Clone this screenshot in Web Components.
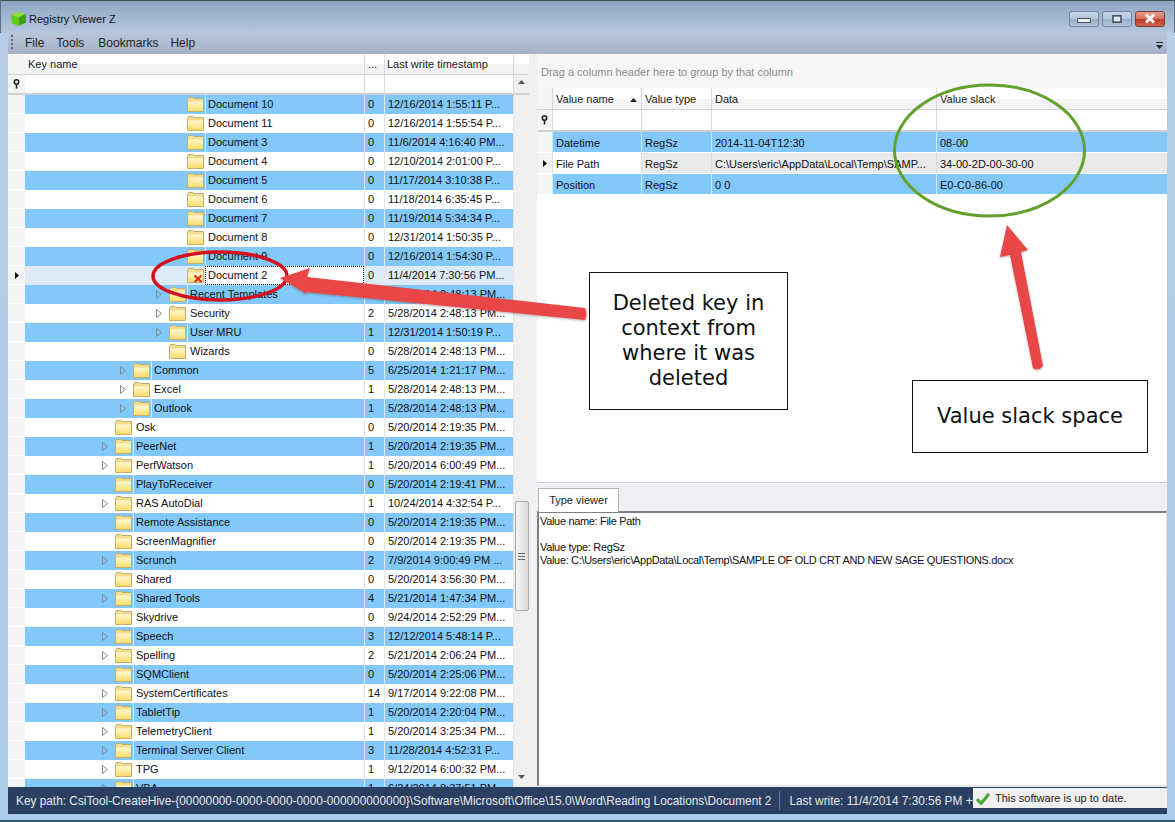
<!DOCTYPE html>
<html>
<head>
<meta charset="utf-8">
<title>Registry Viewer Z</title>
<style>
  html, body { margin: 0; padding: 0; }
  body {
    width: 1175px;
    height: 822px;
    overflow: hidden;
    position: relative;
    font: 11px/13px "Liberation Sans", sans-serif;
    color: #1a1a1a;
    background: #b5d0ec;
  }
</style>
</head>
<body>
<rv-window>
  <rv-titlebar slot="title">Registry Viewer Z</rv-titlebar>
  <rv-menubar slot="menu">
    <span>File</span><span>Tools</span><span>Bookmarks</span><span>Help</span>
  </rv-menubar>
  <rv-key-grid slot="left">
    <rv-key-row level="3" count="0" time="12/16/2014 1:55:11 P...">Document 10</rv-key-row>
    <rv-key-row level="3" count="0" time="12/16/2014 1:55:54 P...">Document 11</rv-key-row>
    <rv-key-row level="3" count="0" time="11/6/2014 4:16:40 PM...">Document 3</rv-key-row>
    <rv-key-row level="3" count="0" time="12/10/2014 2:01:00 P...">Document 4</rv-key-row>
    <rv-key-row level="3" count="0" time="11/17/2014 3:10:38 P...">Document 5</rv-key-row>
    <rv-key-row level="3" count="0" time="11/18/2014 6:35:45 P...">Document 6</rv-key-row>
    <rv-key-row level="3" count="0" time="11/19/2014 5:34:34 P...">Document 7</rv-key-row>
    <rv-key-row level="3" count="0" time="12/31/2014 1:50:35 P...">Document 8</rv-key-row>
    <rv-key-row level="3" count="0" time="12/16/2014 1:54:30 P...">Document 9</rv-key-row>
    <rv-key-row level="3" count="0" time="11/4/2014 7:30:56 PM..." selected deleted>Document 2</rv-key-row>
    <rv-key-row level="2" count="2" time="5/28/2014 2:48:13 PM..." expander>Recent Templates</rv-key-row>
    <rv-key-row level="2" count="2" time="5/28/2014 2:48:13 PM..." expander>Security</rv-key-row>
    <rv-key-row level="2" count="1" time="12/31/2014 1:50:19 P..." expander>User MRU</rv-key-row>
    <rv-key-row level="2" count="0" time="5/28/2014 2:48:13 PM...">Wizards</rv-key-row>
    <rv-key-row level="1" count="5" time="6/25/2014 1:21:17 PM..." expander>Common</rv-key-row>
    <rv-key-row level="1" count="1" time="5/28/2014 2:48:13 PM..." expander>Excel</rv-key-row>
    <rv-key-row level="1" count="1" time="5/28/2014 2:48:13 PM..." expander>Outlook</rv-key-row>
    <rv-key-row level="0" count="0" time="5/20/2014 2:19:35 PM...">Osk</rv-key-row>
    <rv-key-row level="0" count="1" time="5/20/2014 2:19:35 PM..." expander>PeerNet</rv-key-row>
    <rv-key-row level="0" count="1" time="5/20/2014 6:00:49 PM..." expander>PerfWatson</rv-key-row>
    <rv-key-row level="0" count="0" time="5/20/2014 2:19:41 PM...">PlayToReceiver</rv-key-row>
    <rv-key-row level="0" count="1" time="10/24/2014 4:32:54 P..." expander>RAS AutoDial</rv-key-row>
    <rv-key-row level="0" count="0" time="5/20/2014 2:19:35 PM...">Remote Assistance</rv-key-row>
    <rv-key-row level="0" count="0" time="5/20/2014 2:19:35 PM...">ScreenMagnifier</rv-key-row>
    <rv-key-row level="0" count="2" time="7/9/2014 9:00:49 PM ..." expander>Scrunch</rv-key-row>
    <rv-key-row level="0" count="0" time="5/20/2014 3:56:30 PM...">Shared</rv-key-row>
    <rv-key-row level="0" count="4" time="5/21/2014 1:47:34 PM..." expander>Shared Tools</rv-key-row>
    <rv-key-row level="0" count="0" time="9/24/2014 2:52:29 PM...">Skydrive</rv-key-row>
    <rv-key-row level="0" count="3" time="12/12/2014 5:48:14 P..." expander>Speech</rv-key-row>
    <rv-key-row level="0" count="2" time="5/21/2014 2:06:24 PM..." expander>Spelling</rv-key-row>
    <rv-key-row level="0" count="0" time="5/20/2014 2:25:06 PM...">SQMClient</rv-key-row>
    <rv-key-row level="0" count="14" time="9/17/2014 9:22:08 PM..." expander>SystemCertificates</rv-key-row>
    <rv-key-row level="0" count="1" time="5/20/2014 2:20:04 PM..." expander>TabletTip</rv-key-row>
    <rv-key-row level="0" count="1" time="5/20/2014 3:25:34 PM..." expander>TelemetryClient</rv-key-row>
    <rv-key-row level="0" count="3" time="11/28/2014 4:52:31 P..." expander>Terminal Server Client</rv-key-row>
    <rv-key-row level="0" count="1" time="9/12/2014 6:00:32 PM..." expander>TPG</rv-key-row>
    <rv-key-row level="0" count="1" time="6/24/2014 8:37:51 PM..." expander>VBA</rv-key-row>
  </rv-key-grid>
  <rv-value-grid slot="right-top">
    <rv-value-row name="Datetime" type="RegSz" data="2014-11-04T12:30" slack="08-00"></rv-value-row>
    <rv-value-row name="File Path" type="RegSz" data="C:\Users\eric\AppData\Local\Temp\SAMP..." slack="34-00-2D-00-30-00" current></rv-value-row>
    <rv-value-row name="Position" type="RegSz" data="0 0" slack="E0-C0-86-00"></rv-value-row>
  </rv-value-grid>
  <rv-type-viewer slot="right-bottom">Value name: File Path

Value type: RegSz
Value: C:\Users\eric\AppData\Local\Temp\SAMPLE OF OLD CRT AND NEW SAGE QUESTIONS.docx</rv-type-viewer>
  <rv-statusbar slot="status" path="Key path: CsiTool-CreateHive-{00000000-0000-0000-0000-000000000000}\Software\Microsoft\Office\15.0\Word\Reading Locations\Document 2" write="Last write: 11/4/2014 7:30:56 PM +00:00"></rv-statusbar>
</rv-window>
<rv-annotations></rv-annotations>

<script>
const FOLDER = (deleted) => `
  <svg width="17" height="15" viewBox="0 0 17 15">
    <defs><linearGradient id="fy" x1="0" y1="0" x2="0" y2="1">
      <stop offset="0" stop-color="#fff8d0"/><stop offset="1" stop-color="#fbdc69"/>
    </linearGradient></defs>
    <path d="M.5 2.5 V14.5 H16.5 V1.5 H7 L6 .5 H1.5 Z" fill="#f3dc8a" stroke="#bfae76"/>
    <path d="M1 4.5 H16 V14 H1 Z" fill="url(#fy)"/>
    ${deleted ? '<path d="M7.5 7.5 L14.5 14 M14.5 7.5 L7.5 14" stroke="#d2301c" stroke-width="2"/>' : ''}
  </svg>`;

const PIN = `
  <svg width="9" height="10" viewBox="0 0 9 10">
    <circle cx="4.5" cy="3" r="2.2" fill="none" stroke="#222" stroke-width="1.6"/>
    <path d="M4.5 5 V9.5" stroke="#222" stroke-width="1.6"/>
  </svg>`;

class RvWindow extends HTMLElement {
  constructor() {
    super();
    this.attachShadow({ mode: 'open' });
    this.shadowRoot.innerHTML = `
      <style>
        :host {
          display: flex;
          flex-direction: column;
          width: 1175px;
          height: 822px;
          box-sizing: border-box;
          border-bottom: 2px solid #2f5d66;
          background: linear-gradient(#b9cfe8, #abcbec);
        }
        .main {
          display: flex;
          height: 733px;
          padding: 0 8px;
          box-sizing: border-box;
          background: #eef0f3;
          background-clip: content-box;
        }
        .split { width: 8px; }
        .right {
          width: 630px;
          display: flex;
          flex-direction: column;
        }
      </style>
      <slot name="title"></slot>
      <slot name="menu"></slot>
      <div class="main">
        <slot name="left"></slot>
        <div class="split"></div>
        <div class="right">
          <slot name="right-top"></slot>
          <slot name="right-bottom"></slot>
        </div>
      </div>
      <slot name="status"></slot>
    `;
  }
}

class RvTitlebar extends HTMLElement {
  constructor() {
    super();
    this.attachShadow({ mode: 'open' });
    this.shadowRoot.innerHTML = `
      <style>
        :host {
          display: flex;
          align-items: center;
          height: 33px;
          box-sizing: border-box;
          padding: 3px 9px 0 9px;
          border-top: 1px solid #3d4f5b;
          border-left: 1px solid #5b7088;
          border-right: 1px solid #5b7088;
          background: linear-gradient(#8ea6c4, #b6c7dd);
          font: 11px "Liberation Sans", sans-serif;
          color: #111;
        }
        svg { margin-right: 2px; }
        .title { flex: 1; }
        .btn {
          width: 30px;
          height: 16px;
          margin-left: 4px;
          box-sizing: border-box;
          border: 1px solid #6f7f95;
          border-radius: 3px;
          display: flex;
          align-items: center;
          justify-content: center;
          background: linear-gradient(#c5d6ea 0, #b3c5dc 50%, #96abc6 51%, #b4c8df 100%);
        }
        .btn + .btn { margin-left: 3px; }
        .min i { display: block; width: 12px; height: 3px; border: 1px solid #44505e; background: #eef2f6; margin-top: 4px; }
        .max i { display: block; width: 8px; height: 6px; border: 2px solid #44505e; background: #dfe7f0; box-sizing: content-box; transform: scale(.8); }
        .close { background: linear-gradient(#e39c8c 0, #d9705e 50%, #bf3a28 51%, #d0604c 100%); border-color: #7b3c36; }
      </style>
      <svg width="17" height="16" viewBox="0 0 17 16">
        <path d="M1 4 L8 1 L16 3 L9 6 Z" fill="#8fe040"/>
        <path d="M1 4 L9 6 V15 L2 12.5 Z" fill="#5ecb20"/>
        <path d="M9 6 L16 3 V11.5 L9 15 Z" fill="#3a9f14"/>
      </svg>
      <div class="title"><slot></slot></div>
      <div class="btn min"><i></i></div>
      <div class="btn max"><i></i></div>
      <div class="btn close">
        <svg width="14" height="11" viewBox="0 0 14 11" style="margin:0"><path d="M3 1.5 L11 9.5 M11 1.5 L3 9.5" stroke="#fff" stroke-width="3"/></svg>
      </div>
    `;
  }
}

class RvMenubar extends HTMLElement {
  constructor() {
    super();
    this.attachShadow({ mode: 'open' });
    this.shadowRoot.innerHTML = `
      <style>
        :host {
          display: flex;
          align-items: center;
          height: 21px;
          margin: 0 8px;
          padding: 0 0 2px 3px;
          box-sizing: border-box;
          background: linear-gradient(#b8c7dc, #a6b0c5);
          font: 12px "Liberation Sans", sans-serif;
          color: #222;
        }
        .grip {
          width: 2px;
          height: 15px;
          margin-right: 12px;
          background: repeating-linear-gradient(#5d6672 0 2px, transparent 2px 4px);
        }
        ::slotted(span) { margin-right: 12px; }
        ::slotted(span:nth-child(2)) { margin-right: 14px; }
        .over { margin-left: auto; margin-right: 3px; margin-top: 6px; }
      </style>
      <div class="grip"></div>
      <slot></slot>
      <svg class="over" width="9" height="8" viewBox="0 0 9 8">
        <path d="M1 .5 H8" stroke="#1c2430"/><path d="M1 3 H8 L4.5 7 Z" fill="#1c2430"/>
      </svg>
    `;
  }
}

class RvKeyGrid extends HTMLElement {
  constructor() {
    super();
    this.attachShadow({ mode: 'open' });
    this.shadowRoot.innerHTML = `
      <style>
        :host {
          display: flex;
          flex-direction: column;
          width: 521px;
          height: 733px;
          background: #fff;
          overflow: hidden;
          font: 11px/13px "Liberation Sans", sans-serif;
        }
        .hdr {
          display: flex;
          height: 21px;
          box-sizing: border-box;
          padding-top: 1px;
          background: linear-gradient(#fff 50%, #f3f3f6 50%);
          border-bottom: 1px solid #d3d3da;
          color: #222;
          flex: none;
        }
        .filter {
          display: flex;
          height: 20px;
          box-sizing: border-box;
          border-bottom: 2px solid #cfd0d4;
          flex: none;
        }
        .c0 { width: 17px; background: #f4f4f4; display: flex; align-items: center; justify-content: center; }
        .c1 { width: 339px; padding-left: 3px; box-sizing: border-box; }
        .c2 { width: 20px; padding-left: 3px; box-sizing: border-box; border-left: 1px solid #d8d8de; }
        .c3 { width: 129px; padding-left: 2px; box-sizing: border-box; border-left: 1px solid #d8d8de; }
        .c4 { width: 16px; box-sizing: border-box; border-left: 1px solid #d8d8de; }
        .hdr div { display: flex; align-items: center; white-space: nowrap; padding-bottom: 1px; }
        .body { display: flex; flex: 1; min-height: 0; }
        .rows { width: 505px; overflow: hidden; }
        .bar {
          width: 16px;
          display: flex;
          flex-direction: column;
          align-items: center;
          background: #f0f0f0;
          border-left: 1px solid #e4e4e4;
          box-sizing: border-box;
        }
        .filter .c4 { background: #f0f0f0; display: flex; justify-content: center; padding-top: 5px; }
        .thumb {
          width: 14px;
          height: 110px;
          margin-top: 406px;
          box-sizing: border-box;
          border: 1px solid #a9a9a9;
          border-radius: 2px;
          background: linear-gradient(90deg, #f4f4f4, #dcdcdc);
          display: flex;
          align-items: center;
          justify-content: center;
        }
        .thumb i { display: block; width: 7px; height: 7px; background: repeating-linear-gradient(#666 0 1px, transparent 1px 3px); }
        .down { margin-top: auto; margin-bottom: 8px; }
      </style>
      <div class="hdr">
        <div class="c0"></div><div class="c1">Key name</div><div class="c2">...</div><div class="c3">Last write timestamp</div><div class="c4"></div>
      </div>
      <div class="filter">
        <div class="c0">${PIN}</div><div class="c1"></div><div class="c2"></div><div class="c3"></div>
        <div class="c4"><svg width="7" height="4" viewBox="0 0 7 4"><path d="M0 4 L3.5 0 L7 4 Z" fill="#555"/></svg></div>
      </div>
      <div class="body">
        <div class="rows"><slot></slot></div>
        <div class="bar">
          <div class="thumb"><i></i></div>
          <svg class="down" width="7" height="4" viewBox="0 0 7 4"><path d="M0 0 L7 0 L3.5 4 Z" fill="#555"/></svg>
        </div>
      </div>
    `;
  }
}

class RvKeyRow extends HTMLElement {
  constructor() {
    super();
    this.attachShadow({ mode: 'open' });
  }

  connectedCallback() {
    const level = Number(this.getAttribute('level') || 0);
    const index = Array.from(this.parentNode.children).indexOf(this);
    const selected = this.hasAttribute('selected');
    const stripe = selected ? '#dcebf7' : index % 2 === 0 ? '#82c8fa' : '#fff';
    const folderLeft = { 0: 90, 1: 108, 2: 144, 3: 162 }[level];
    this.shadowRoot.innerHTML = `
      <style>
        :host {
          display: flex;
          height: 19px;
          background: ${stripe};
          white-space: nowrap;
          color: #111;
        }
        .ind {
          width: 17px;
          background: #f4f4f4;
          border-bottom: 1px solid #fff;
          box-sizing: border-box;
          display: flex;
          align-items: center;
          justify-content: center;
        }
        .tree {
          width: 339px;
          display: flex;
          align-items: center;
          padding-left: ${folderLeft - 18}px;
          box-sizing: border-box;
        }
        .exp { width: 18px; display: flex; padding-left: 5px; box-sizing: border-box; }
        .name {
          flex: 1;
          height: 100%;
          display: flex;
          align-items: center;
          margin-left: 1px;
          padding-left: 2px;
          box-sizing: border-box;
          border-left: 1px solid ${index % 2 === 0 && !selected ? '#d5ecfd' : 'transparent'};
          ${selected ? 'outline: 1px dotted #111; outline-offset: -1px; background: #fff;' : ''}
        }
        .folder { display: flex; width: 17px; flex: none; }
        .n { width: 20px; padding-left: 3px; box-sizing: border-box; border-left: 1px solid #e3e6ea; display: flex; align-items: center; }
        .t { width: 129px; padding-left: 3px; box-sizing: border-box; border-left: 1px solid #e3e6ea; display: flex; align-items: center; overflow: hidden; }
      </style>
      <div class="ind">${selected ? '<svg width="4" height="7" viewBox="0 0 4 7"><path d="M0 0 L4 3.5 L0 7 Z" fill="#111"/></svg>' : ''}</div>
      <div class="tree">
        <div class="exp">${this.hasAttribute('expander') ? '<svg width="6" height="9" viewBox="0 0 6 9"><path d="M.5 .5 L5.5 4.5 L.5 8.5 Z" fill="none" stroke="#7f8b96"/></svg>' : ''}</div>
        <div class="folder">${FOLDER(this.hasAttribute('deleted'))}</div>
        <div class="name"><slot></slot></div>
      </div>
      <div class="n">${this.getAttribute('count')}</div>
      <div class="t">${this.getAttribute('time')}</div>
    `;
  }
}

class RvValueGrid extends HTMLElement {
  constructor() {
    super();
    this.attachShadow({ mode: 'open' });
    this.shadowRoot.innerHTML = `
      <style>
        :host {
          display: block;
          height: 429px;
          flex: none;
          background: #fff;
          border-bottom: 1px solid #cfcfcf;
          box-sizing: border-box;
          font: 11px/13px "Liberation Sans", sans-serif;
        }
        .group {
          height: 34px;
          background: #f6f6f6;
          color: #8c8c8c;
          display: flex;
          align-items: center;
          padding-left: 4px;
          padding-top: 2px;
          box-sizing: border-box;
        }
        .hdr, .filter { display: flex; }
        .hdr {
          height: 22px;
          box-sizing: border-box;
          background: linear-gradient(#fff 50%, #f3f3f6 50%);
          border-bottom: 1px solid #d3d3da;
          color: #222;
        }
        .hdr div { padding-top: 2px; }
        .filter { height: 22px; box-sizing: border-box; border-bottom: 2px solid #cfd0d4; }
        .c0 { width: 15px; background: #f4f4f4; display: flex; align-items: center; justify-content: center; }
        .c1, .c2, .c3, .c4 {
          box-sizing: border-box;
          padding-left: 3px;
          border-left: 1px solid #d8d8de;
          display: flex;
          align-items: center;
        }
        .c1 { width: 89px; justify-content: space-between; padding-right: 4px; }
        .c2 { width: 70px; }
        .c3 { width: 225px; }
        .c4 { width: 231px; }
      </style>
      <div class="group">Drag a column header here to group by that column</div>
      <div class="hdr">
        <div class="c0"></div>
        <div class="c1">Value name<svg width="7" height="4" viewBox="0 0 7 4"><path d="M0 4 L3.5 0 L7 4 Z" fill="#222"/></svg></div>
        <div class="c2">Value type</div><div class="c3">Data</div><div class="c4">Value slack</div>
      </div>
      <div class="filter">
        <div class="c0">${PIN}</div><div class="c1"></div><div class="c2"></div><div class="c3"></div><div class="c4"></div>
      </div>
      <slot></slot>
    `;
  }
}

class RvValueRow extends HTMLElement {
  constructor() {
    super();
    this.attachShadow({ mode: 'open' });
  }

  connectedCallback() {
    const current = this.hasAttribute('current');
    const bg = current ? '#e9e9e9' : '#82c8fa';
    const line = current ? '#dcdcdc' : '#cfe8fb';
    this.shadowRoot.innerHTML = `
      <style>
        :host { display: flex; height: 21px; color: #111; }
        div { box-sizing: border-box; display: flex; align-items: center; white-space: nowrap; border-bottom: 1px solid #fff; }
        .i { width: 15px; background: #f4f4f4; justify-content: center; }
        .c { background: ${bg}; padding: 2px 0 0 3px; border-left: 1px solid ${line}; }
      </style>
      <div class="i">${current ? '<svg width="4" height="7" viewBox="0 0 4 7"><path d="M0 0 L4 3.5 L0 7 Z" fill="#111"/></svg>' : ''}</div>
      <div class="c" style="width:89px;${current ? 'background:#fff' : ''}">${this.getAttribute('name')}</div>
      <div class="c" style="width:70px">${this.getAttribute('type')}</div>
      <div class="c" style="width:225px">${this.getAttribute('data')}</div>
      <div class="c" style="width:231px">${this.getAttribute('slack')}</div>
    `;
  }
}

class RvTypeViewer extends HTMLElement {
  constructor() {
    super();
    this.attachShadow({ mode: 'open' });
    this.shadowRoot.innerHTML = `
      <style>
        :host {
          display: flex;
          flex-direction: column;
          flex: 1;
          min-height: 0;
          padding-top: 5px;
          padding-bottom: 1px;
          box-sizing: border-box;
          font: 11px/13px "Liberation Sans", sans-serif;
        }
        .tab {
          width: 81px;
          height: 24px;
          margin-left: 1px;
          margin-bottom: -1px;
          box-sizing: border-box;
          background: #fff;
          border: 1px solid #b5b5b5;
          border-bottom: 0;
          display: flex;
          align-items: center;
          justify-content: center;
          color: #222;
          position: relative;
        }
        .box {
          flex: 1;
          background: #fff;
          border: 1px solid #8c8c8c;
          border-top: 2px solid #7f7f7f;
          border-left: 2px solid #7f7f7f;
          border-right-color: #ddd;
          border-bottom-color: #ddd;
          padding: 2px 1px;
          white-space: pre;
          letter-spacing: -.33px;
          color: #111;
          overflow: hidden;
        }
      </style>
      <div class="tab">Type viewer</div>
      <div class="box"><slot></slot></div>
    `;
  }
}

class RvStatusbar extends HTMLElement {
  constructor() {
    super();
    this.attachShadow({ mode: 'open' });
  }

  connectedCallback() {
    this.shadowRoot.innerHTML = `
      <style>
        :host {
          display: flex;
          align-items: center;
          height: 27px;
          margin: 0 8px;
          padding: 0 194px 0 8px;
          box-sizing: border-box;
          background: #2a3f61;
          color: #e6eaf0;
          font: 11.85px "Liberation Sans", sans-serif;
          white-space: nowrap;
          position: relative;
        }
        .path { flex: none; }
        .sep { width: 1px; height: 19px; background: #6d7c94; margin: 0 9px 0 8px; flex: none; }
        .write { flex: 1; min-width: 0; overflow: hidden; }
        .note {
          position: absolute;
          right: 0;
          top: 1px;
          width: 194px;
          height: 20px;
          background: #f0f0f0;
          color: #222;
          font-size: 11px;
          display: flex;
          align-items: center;
        }
        .note svg { margin: 0 5px 0 3px; }
      </style>
      <span class="path">${this.getAttribute('path')}</span>
      <span class="sep"></span>
      <span class="write">${this.getAttribute('write')}</span>
      <div class="note">
        <svg width="14" height="13" viewBox="0 0 14 13"><path d="M1 7 L5 11.5 L13 2" fill="none" stroke="#4aa83a" stroke-width="3.2"/></svg>
        This software is up to date.
      </div>
    `;
  }
}

class RvCallout extends HTMLElement {
  constructor() {
    super();
    this.attachShadow({ mode: 'open' });
    this.shadowRoot.innerHTML = `
      <style>
        :host {
          position: absolute;
          box-sizing: border-box;
          display: flex;
          align-items: center;
          justify-content: center;
          text-align: center;
          background: #fff;
          border: 1px solid #111;
          color: #111;
          font: 21px/25px "DejaVu Sans", sans-serif;
        }
      </style>
      <slot></slot>
    `;
  }
}

class RvAnnotations extends HTMLElement {
  constructor() {
    super();
    this.attachShadow({ mode: 'open' });
    this.shadowRoot.innerHTML = `
      <style>
        :host { position: absolute; left: 0; top: 0; width: 1175px; height: 822px; display: block; pointer-events: none; }
        svg { position: absolute; left: 0; top: 0; }
        rv-callout.a { left: 589px; top: 272px; width: 199px; height: 138px; }
        rv-callout.b { left: 912px; top: 380px; width: 236px; height: 73px; }
      </style>
      <svg width="1175" height="822" viewBox="0 0 1175 822">
        <defs>
          <filter id="sh" x="-5%" y="-5%" width="110%" height="120%">
            <feDropShadow dx="0" dy="1" stdDeviation="1.2" flood-color="#000" flood-opacity=".3"/>
          </filter>
        </defs>
        <ellipse cx="220" cy="276" rx="67" ry="24" fill="none" stroke="#d4101c" stroke-width="3.5"/>
        <ellipse cx="989.5" cy="150.5" rx="95" ry="65.5" fill="none" stroke="#63a02e" stroke-width="3"/>
        <g fill="#e94646" filter="url(#sh)">
          <path d="M280 278 L310 268 L307 277 L585 308 Q588 314 585 320 L305 292 L308 295 Z"/>
          <path d="M1007 225 L1028 250 L1021 252 L1043 366 Q1038 372 1033 368 L1010 255 L1000 257 Z"/>
        </g>
      </svg>
      <rv-callout class="a">Deleted key in<br>context from<br>where it was<br>deleted</rv-callout>
      <rv-callout class="b">Value slack space</rv-callout>
    `;
  }
}

customElements.define('rv-window', RvWindow);
customElements.define('rv-titlebar', RvTitlebar);
customElements.define('rv-menubar', RvMenubar);
customElements.define('rv-key-grid', RvKeyGrid);
customElements.define('rv-key-row', RvKeyRow);
customElements.define('rv-value-grid', RvValueGrid);
customElements.define('rv-value-row', RvValueRow);
customElements.define('rv-type-viewer', RvTypeViewer);
customElements.define('rv-statusbar', RvStatusbar);
customElements.define('rv-callout', RvCallout);
customElements.define('rv-annotations', RvAnnotations);
</script>
</body>
</html>
